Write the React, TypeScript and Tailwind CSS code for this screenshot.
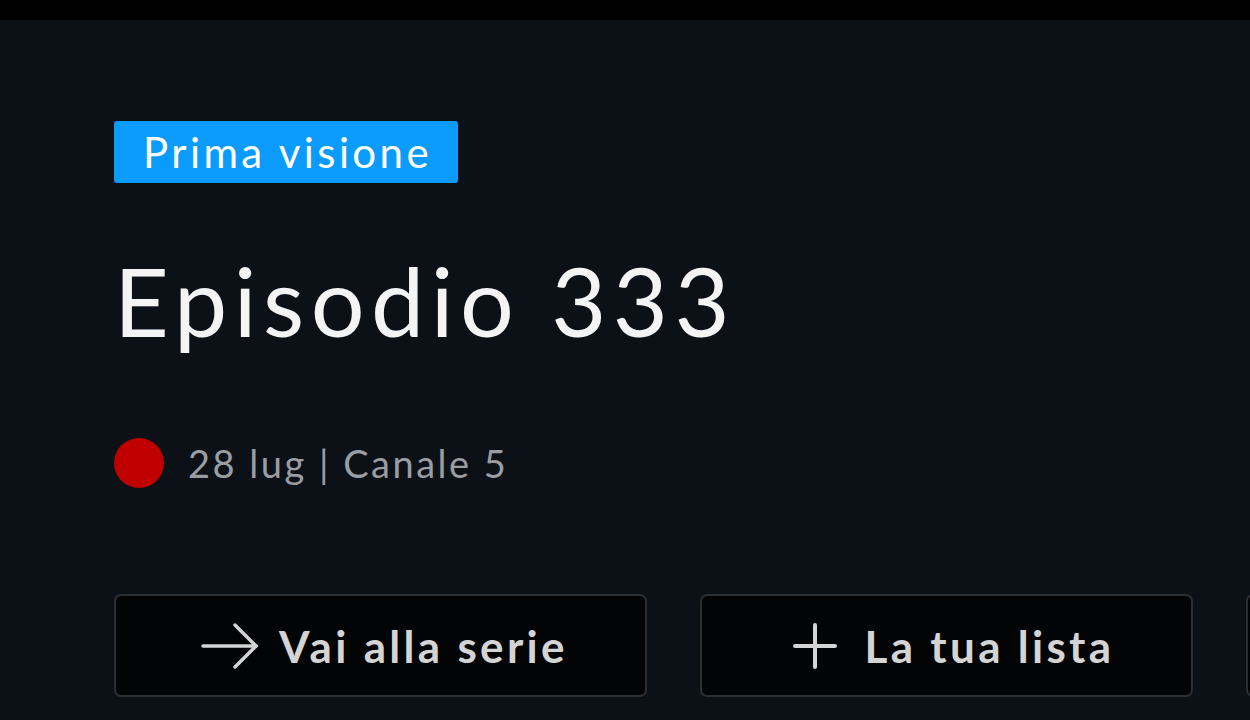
import React from "react";

export default function App() {
  return (
    <div className="w-[1250px] h-[720px] overflow-hidden flex flex-col bg-[#0c1118]" style={{ fontFamily: "Lato, 'Noto Sans', sans-serif" }}>
      <div className="h-[20px] bg-black shrink-0" />
      <div className="flex flex-col pl-[114px] pt-[101px]">
        <div className="self-start h-[62px] pl-[29px] pr-[26px] flex items-center rounded-[3px] bg-[#0b9bfc] text-[42px] leading-none text-white tracking-[3.4px]">
          Prima visione
        </div>
        <div className="mt-[62px] h-[110px] flex items-center text-[95px] leading-none text-[#f4f4f4] tracking-[6.5px]">
          Episodio 333
        </div>
        <div className="mt-[83px] flex items-center gap-[24px] h-[50px]">
          <div className="w-[50px] h-[50px] rounded-full bg-[#c00000]" />
          <div className="text-[38px] leading-none text-[#9a9da2] tracking-[2.5px]">28 lug | Canale 5</div>
        </div>
        <div className="mt-[106px] flex gap-[53px]">
          <div className="w-[533px] h-[103px] shrink-0 rounded-[7px] border-2 border-[#2b2e33] bg-[#030405] flex items-center justify-center gap-[20px] pl-[8px] text-[#d4d4d4]">
            <svg width="58" height="46" viewBox="0 0 58 46" fill="none" stroke="#d4d4d4" strokeWidth="3.5" strokeLinecap="round">
              <path d="M2 23 H55" />
              <path d="M34 2 L55 23 L34 44" />
            </svg>
            <span className="text-[44px] font-bold leading-none tracking-[3.3px]">Vai alla serie</span>
          </div>
          <div className="w-[493px] h-[103px] shrink-0 rounded-[7px] border-2 border-[#2b2e33] bg-[#030405] flex items-center justify-center gap-[28px] pl-[14px] text-[#d4d4d4]">
            <svg width="44" height="46" viewBox="0 0 44 46" fill="none" stroke="#d4d4d4" strokeWidth="4" strokeLinecap="round">
              <path d="M2 23 H42" />
              <path d="M22 2 V44" />
            </svg>
            <span className="text-[44px] font-bold leading-none tracking-[3.3px]">La tua lista</span>
          </div>
          <div className="w-[400px] h-[103px] shrink-0 rounded-[7px] border-2 border-[#2b2e33] bg-[#030405]" />
        </div>
      </div>
    </div>
  );
}
